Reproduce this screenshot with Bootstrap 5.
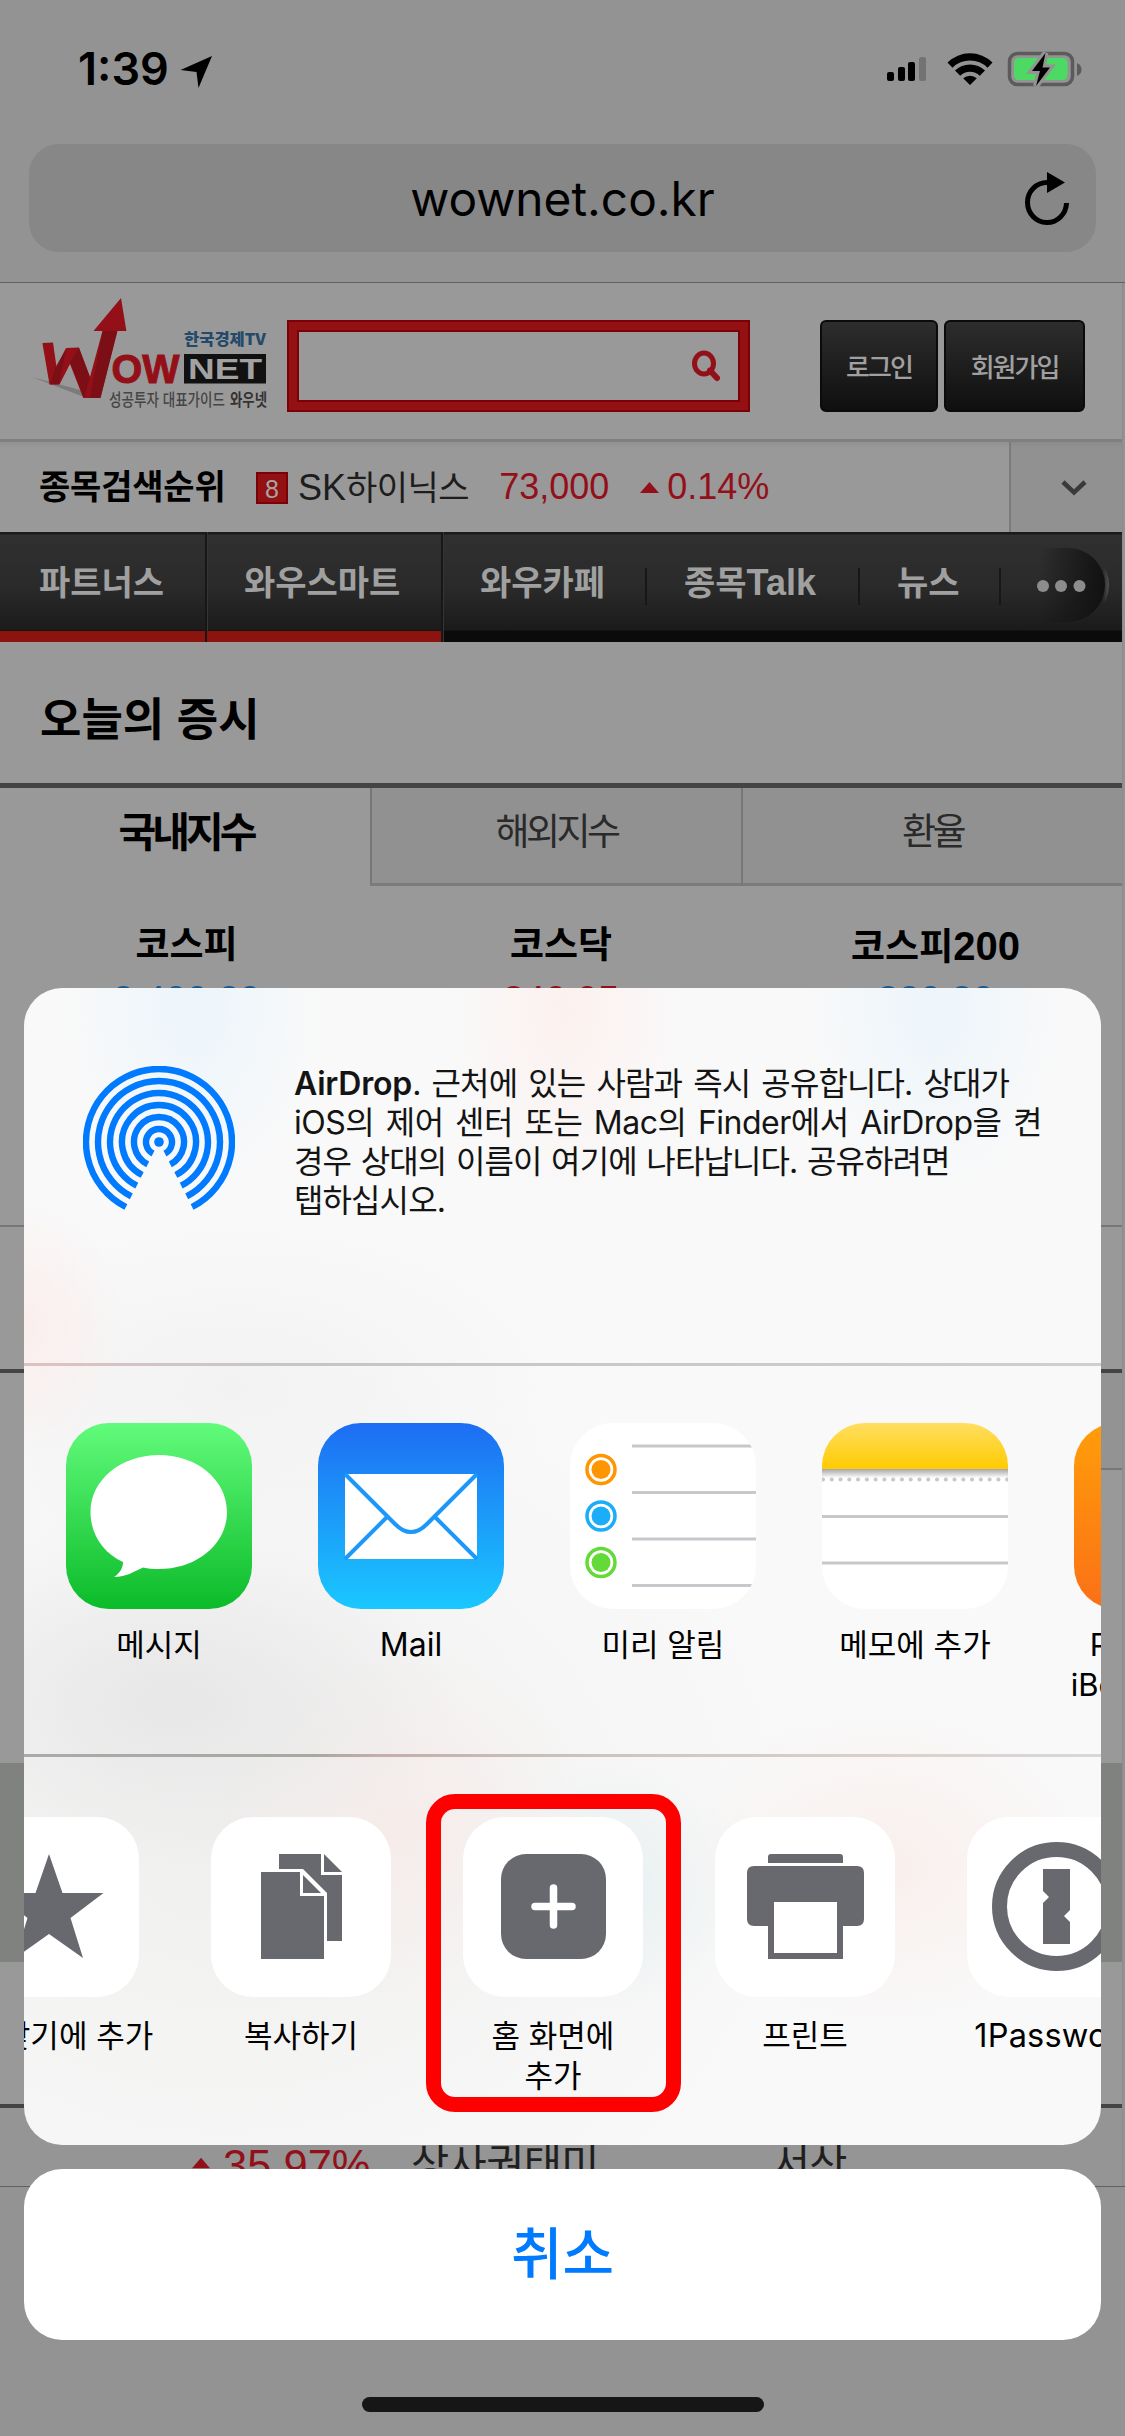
<!DOCTYPE html>
<html lang="ko">
<head>
<meta charset="utf-8">
<meta name="viewport" content="width=device-width, initial-scale=1">
<title>wownet.co.kr</title>
<link rel="stylesheet" href="https://cdn.jsdelivr.net/npm/bootstrap@5.3.0/dist/css/bootstrap.min.css">
<script src="https://cdn.jsdelivr.net/npm/bootstrap@5.3.0/dist/js/bootstrap.bundle.min.js"></script>
<style>
html,body{margin:0;background:#929292;overflow:hidden}
.screen{width:1125px;height:2436px;position:relative;overflow:hidden;background:#939393;color:#000;
  font-family:"Liberation Sans","Noto Sans CJK KR",sans-serif;line-height:1;white-space:nowrap}
.screen svg{display:block;flex:none}
.ios{font-family:Inter,"Noto Sans CJK KR",sans-serif}
.ko{font-family:"Noto Sans CJK KR",sans-serif}
.statusbar{height:144px;padding:45px 43px 0 78px}
.clock{font-size:45px;font-weight:600;line-height:48px}
.urlbar{height:108px;margin:0 29px;border-radius:30px;background:#878787;position:relative}
.urltext{font-size:47.8px;line-height:110px}
.reload{position:absolute;right:25px;top:26px}
.toolbar-end{height:31px;border-bottom:1px solid #606060}
.site{width:1123px;height:1903px;background:#999;overflow:hidden;border-right:1px solid #8b8b8b}
.masthead{height:159px;border-bottom:3px solid #7f7f7f;padding:0 37px 0 32px}
.searchbox{width:463px;height:92px;border:2px solid #7c0008;background:#931013;padding:8px;margin:37px 0 0 15px}
.searchbox>div{border:2px solid #7c0008;background:#999;height:100%;padding-right:17px}
.darkbtn{height:92px;border:2px solid #0b0b0b;border-radius:6px;background:linear-gradient(#2d2d2d,#0f0f0f);color:#a0a0a0;
  font-size:26px;font-weight:500;letter-spacing:-2px;line-height:87px;text-align:center;margin-top:37px}
.ranking{height:90px;padding-left:39px;background:linear-gradient(#929292,#999 6px)}
.rank-title{font-size:34px;font-weight:700;width:217px;letter-spacing:-.2px;margin-top:-5px}
.rank-no{width:32px;height:32px;background:#931013;border:2px solid #7c0008;color:#a5a5a5;font-size:25px;line-height:30px;text-align:center;margin-top:2px}
.red{color:#93101a}
.more{width:113px;height:90px;background:linear-gradient(#8b8b8b,#919191 6px);border-left:2px solid #7b7b7b}
.mainnav{height:110px;background:linear-gradient(#1b1b1b 0,#1b1b1b 2px,#303030 3px,#2a2a2a 50%,#1b1b1b 98px,#0b0b0b 99px,#0b0b0b);color:#a0a0a0;
  font-size:34px;font-weight:700}
.mainnav>div{height:110px;line-height:98px}
.hot{background:linear-gradient(transparent 99px,#8b140f 99px);border-right:2px solid #171717;box-shadow:1px 0 0 #353535}
.thin{background:linear-gradient(#171717,#171717) right 36px/2px 37px no-repeat}
.tabs{height:103px;border-top:5px solid #454344;background:#999}
.tab-off{background:#919191;border-left:2px solid #777;border-bottom:3px solid #7b7b7b;height:98px;font-size:37px;letter-spacing:-3.5px;color:#2a2a2a;line-height:83px;text-align:center}
.tab-on{width:370px;font-size:41px;letter-spacing:-4px;font-weight:700;line-height:82px;text-align:center;padding-left:2px}
.idx{font-size:37px;font-weight:700;text-align:center}
.idx b{font:700 40px "Liberation Sans"}
.quote{font-size:38px;height:50px;line-height:38px;text-align:center}
.below{background:#959595;color:#1f1f1f;height:82px;border-top:4px solid #444;padding:33px 0 0 192px}
.below .ko{font-size:41.500px}
.sheet{position:absolute;left:24px;top:988px;width:1077px;height:1157px;border-radius:38px;overflow:hidden;
 background:
  radial-gradient(ellipse 130px 190px at 170px 20px,#ecf5fb,transparent),
  radial-gradient(ellipse 120px 190px at 540px 20px,#fcf1ef,transparent),
  radial-gradient(ellipse 130px 190px at 910px 20px,#ecf5fb,transparent),
  radial-gradient(ellipse 100px 130px at 0 340px,#fbeeed,transparent),
  radial-gradient(ellipse 330px 170px at 210px 400px,#f2f2f2,transparent),
  radial-gradient(ellipse 290px 170px at 150px 715px,#e7e7e7,transparent),
  radial-gradient(ellipse 190px 180px at 370px 840px,#f6ecea,transparent),
  radial-gradient(ellipse 140px 130px at 590px 900px,#e9f0f2,transparent),
  radial-gradient(ellipse 210px 160px at 860px 880px,#f9efec,transparent),
  radial-gradient(ellipse 600px 500px at 200px 850px,#f0f0ef,transparent),#f9f9f9}
.airdrop{height:375px;padding:78px 0 0 59px}
.airtext{margin:-2px 0 0 59px;font-size:32px;line-height:39px;color:#141414}
.airtext span{display:block;letter-spacing:-.9px;word-spacing:1.500px}
.airtext span b{font-weight:600;letter-spacing:-.2px}
.airtext .l1{word-spacing:3px}
.airtext .l2{letter-spacing:-.5px;word-spacing:3px}
.rule{height:3px}
.rule1{background:linear-gradient(90deg,#dcc3c3,#c5c5c7 25%,#cfcfcf)}
.rule2{background:linear-gradient(90deg,#a9abaa,#aaa7a2 27%,#c3aeab 33%,#cdc6c0 55%,#dccfcb 80%,#d8d8d8)}
.apps{height:388px;padding:57px 0 0 9px}
.tile{width:252px;flex:none;text-align:center;font-size:31px;line-height:40px;color:#000}
.tile .face{width:186px;height:186px;border-radius:43px;overflow:hidden;margin:0 auto 16px}
.acts{padding:60px 0 0 0;margin-left:-101px}
.acts .face{width:180px;height:180px;border-radius:42px;background:#fff;margin-bottom:19px}
.cancelbtn{position:absolute;left:24px;top:2169px;width:1077px;height:171px;border-radius:38px;border:0;background:#fff;color:#007aff;font-size:56px;font-weight:500;line-height:150px;padding:0 0 9px}
.hilite{position:absolute;left:426px;top:1794px;width:255px;height:318px;border:15px solid #f00;border-radius:29px}
.homebar{position:absolute;left:362px;top:2397px;width:402px;height:15px;border-radius:8px;background:#161616}
</style>
</head>
<body>
<div class="screen">
  <div class="statusbar d-flex justify-content-between ios">
    <div class="d-flex">
      <div class="clock">1:39</div>
      <svg class="mt-2" style="margin-left:10px" width="34" height="38" viewBox="0 0 34 38"><path d="M33 3 19.500 35 17.500 19 1.500 17z"/></svg>
    </div>
    <svg width="196" height="44" viewBox="886 45 196 44">
      <rect x="887" y="72" width="7" height="9" rx="2"/><rect x="898" y="67" width="7" height="14" rx="2"/><rect x="908" y="62" width="7" height="19" rx="2"/><rect x="919" y="57" width="7" height="24" rx="2" fill="#737373"/>
      <path d="M947.500 62.500a32 32 0 0 1 45 0l-5 5.200a24.700 24.700 0 0 0-35 0zM955 70.500a21.500 21.500 0 0 1 30 0l-5.200 5.200a14 14 0 0 0-19.600 0zM963.200 78.300a10 10 0 0 1 13.600 0L970 85z"/>
      <rect x="1009.500" y="53.500" width="63" height="31" rx="8" fill="none" stroke="#5b5b5b" stroke-width="3.500"/>
      <path d="M1077 63q4.500 2 4.500 6.500t-4.500 6.500z" fill="#5b5b5b"/>
      <rect x="1014" y="58" width="53.500" height="22" rx="4.500" fill="#4cd964"/>
      <path d="M1045.500 53 1032 71H1040L1036 86 1050 67.500H1042.500z" stroke="#939393" stroke-width="6" paint-order="stroke"/>
    </svg>
  </div>
  <div class="urlbar text-center ios">
    <span class="urltext">wownet.co.kr</span>
    <svg class="reload" width="48" height="56" viewBox="0 0 48 56"><path d="M43.500 33A19.500 20 0 1 1 24 12.500" fill="none" stroke="#000" stroke-width="5"/><path d="M24 2 42 12.500 24 23z"/></svg>
  </div>
  <div class="toolbar-end"></div>

  <div class="site">
    <div class="masthead d-flex">
      <svg style="margin-top:7px" width="240" height="130" viewBox="32 290 240 130">
        <path d="M32 377 84 391v6z" fill="#7c7c7c"/>
        <path d="M42.400 343 53 342.500 56.500 367 66 348 79 347.500 90 377 102.500 331H93.500L121 298 126.400 331H117.400L100.500 398H83.300L70 364 59.500 384.500H49.500z" fill="#931018"/>
        <path d="M66 349 59 384.500H50L56 366zM79 348 90 377 84 398 70 362zM102.500 331H117.400L100.500 398H90z" fill="#6e0f14" opacity=".65"/>
        <g font-family="Liberation Sans" font-weight="700">
          <text x="111.500" y="383" font-size="40" fill="#931018" stroke="#931018" textLength="68" lengthAdjust="spacingAndGlyphs">OW</text>
          <rect x="184" y="354" width="82" height="29.500" fill="#111"/>
          <text x="188" y="379" font-size="29" fill="#a2a2a2" textLength="74" lengthAdjust="spacingAndGlyphs">NET</text>
        </g>
        <g font-family="Noto Sans CJK KR">
          <text x="184" y="345" font-size="16" font-weight="900" fill="#24496a" textLength="82" lengthAdjust="spacingAndGlyphs">한국경제TV</text>
          <text x="109" y="406" font-size="17" font-weight="500" fill="#454545" textLength="116" lengthAdjust="spacingAndGlyphs">성공투자 대표가이드</text>
          <text x="230" y="406" font-size="17" font-weight="700" fill="#333" textLength="37" lengthAdjust="spacingAndGlyphs">와우넷</text>
        </g>
      </svg>
      <div class="searchbox"><div class="d-flex align-items-center justify-content-end">
        <svg width="30" height="32" viewBox="0 0 30 32"><ellipse cx="13" cy="13.500" rx="9.500" ry="10.500" fill="none" stroke="#931018" stroke-width="5"/><path d="M19 20.500 26 28" stroke="#931018" stroke-width="6" stroke-linecap="round"/></svg>
      </div></div>
      <div class="darkbtn ko ms-auto" style="width:118px">로그인</div>
      <div class="darkbtn ko" style="width:141px;margin-left:6px">회원가입</div>
    </div>
    <div class="ranking d-flex align-items-center">
      <div class="rank-title ko">종목검색순위</div>
      <div class="rank-no">8</div>
      <div class="d-flex align-items-center" style="font-size:36px">
        <span style="margin-left:10px;color:#1d1d1d">SK<span class="ko" style="font-size:34px;letter-spacing:-.5px">하이닉스</span></span>
        <span class="red" style="margin-left:30px">73,000</span>
        <svg style="margin-left:31px" width="19" height="11" viewBox="0 0 19 11"><path d="M9.500 0 19 11H0z" fill="#93101a"/></svg>
        <span class="red" style="margin-left:8px">0.14%</span>
      </div>
      <div class="more ms-auto d-flex align-items-center justify-content-center">
        <svg style="margin-left:15px" width="28" height="20" viewBox="0 0 28 20"><path d="M3 5 14 15.500 25 5" fill="none" stroke="#3a3a3a" stroke-width="4.500"/></svg>
      </div>
    </div>
    <div class="mainnav d-flex ko">
      <div class="hot" style="width:207px;padding-left:39px">파트너스</div>
      <div class="hot" style="width:236px;padding-left:37px">와우스마트</div>
      <div class="thin" style="width:204px;padding-left:37px">와우카페</div>
      <div class="thin" style="width:213px;padding-left:37px">종목<span style="font:700 36px 'Liberation Sans'">Talk</span></div>
      <div class="thin" style="width:141px;padding-left:37px">뉴스</div>
      <svg width="120" height="98" viewBox="1001 532 120 98"><defs><linearGradient id="pill"><stop offset="0" stop-color="#111" stop-opacity="0"/><stop offset="1" stop-color="#111"/></linearGradient><linearGradient id="glow"><stop offset=".9" stop-color="#555" stop-opacity="0"/><stop offset="1" stop-color="#666"/></linearGradient></defs>
        <path d="M1050 548h22a37 37 0 0 1 0 74h-22z" fill="url(#glow)" opacity=".7"/><path d="M1040 548h28a37 37 0 0 1 0 74h-28z" fill="url(#pill)"/><g fill="#8d8d8d"><circle cx="1043" cy="586" r="6"/><circle cx="1061" cy="586" r="6"/><circle cx="1079.500" cy="586" r="6"/></g></svg>
    </div>
    <div class="ko" style="height:141px;padding-left:40px;font-size:45px;font-weight:700;line-height:150px">오늘의 증시</div>
    <div class="tabs d-flex ko">
      <div class="tab-on">국내지수</div>
      <div class="tab-off" style="width:371px">해외지수</div>
      <div class="tab-off flex-fill">환율</div>
    </div>
    <div class="d-flex ko" style="height:95px;padding-top:38px">
      <div class="idx" style="width:373px">코스피</div>
      <div class="idx" style="width:376px">코스닥</div>
      <div class="idx flex-fill">코스피<b>200</b></div>
    </div>
    <div class="d-flex" style="height:244px">
      <div class="quote" style="width:373px;color:#175a91">2,400.20</div>
      <div class="quote" style="width:376px;color:#93101a">840.05</div>
      <div class="quote flex-fill" style="color:#175a91">320.30</div>
    </div>
    <div style="height:144px;border-top:2px solid #777"></div>
    <div style="height:394px;border-top:4px solid #444;background:linear-gradient(90deg,transparent 560px,#939393 560px) 0 0/100% 95px no-repeat">
      <div style="height:97px;border-bottom:2px solid #777;margin-left:560px"></div>
    </div>
    <div style="height:199px;background:#7f827f"></div>
    <div style="height:142px"></div>
    <div class="below d-flex">
      <svg style="margin:16px 13px 0 0" width="18" height="12" viewBox="0 0 19 11"><path d="M9.500 0 19 11H0z" fill="#93101a"/></svg>
      <span class="red" style="width:188px;padding-top:4px;font-size:43.500px">35.97%</span>
      <span class="ko" style="width:361px;letter-spacing:-.6px">상사권태미</span><span class="ko" style="letter-spacing:-1px">서산</span>
    </div>
  </div>
  <div style="height:1px;background:#606060"></div>

  <div class="sheet ios">
    <div class="airdrop d-flex align-items-start">
      <svg width="152" height="152" viewBox="-76 -76 152 152"><g fill="none" stroke="#007aff" stroke-width="6.400">
        <path d="M-33.100 65A73 73 0 1 1 33.100 65M-27.700 54.400A61 61 0 1 1 27.700 54.400M-22.200 43.700A49 49 0 1 1 22.200 43.700M-16.800 33A37 37 0 1 1 16.800 33M-11.300 22.300A25 25 0 1 1 11.300 22.300M-6 11.600A13 13 0 1 1 6 11.600"/></g><circle r="4.800" fill="#007aff"/></svg>
      <div class="airtext"><span class="l1"><b>AirDrop</b>. 근처에 있는 사람과 즉시 공유합니다. 상대가</span><span class="l2">iOS의 제어 센터 또는 Mac의 Finder에서 AirDrop을 켠</span><span>경우 상대의 이름이 여기에 나타납니다. 공유하려면</span><span>탭하십시오.</span></div>
    </div>
    <div class="rule rule1"></div>
    <div class="apps d-flex">
      <div class="tile"><div class="face" style="background:linear-gradient(#62fb7b,#0bbb29)"><svg width="186" height="186" viewBox="0 0 186 186"><path fill="#fff" d="M93 32c38 0 68 25 68 57s-30 57-68 57c-6 0-11-.6-16-1.600C69 148 60 154 48 154c6-4 9-9 9-15C37 130 24.500 111 24.500 89 24.500 57 55 32 93 32z"/></svg></div>메시지</div>
      <div class="tile"><div class="face" style="background:linear-gradient(#1d6df3,#1ac8ff)"><svg width="186" height="186" viewBox="0 0 186 186"><rect x="27" y="51" width="132" height="85" rx="4" fill="#fff"/><path d="M27 51 77 101Q93 117 109 101L159 51M27 136 69 94M159 136 117 94" fill="none" stroke="#1c98fb" stroke-width="4"/></svg></div><span style="font-size:32px">Mail</span></div>
      <div class="tile"><div class="face bg-white"><svg width="186" height="186" viewBox="0 0 186 186"><path d="M62 23h124M62 69.500h124M62 116h124M62 162.500h124" stroke="#c8c7cc" stroke-width="3.200"/><g fill="none" stroke-width="3.500"><circle cx="31" cy="46.500" r="14" stroke="#ff9500"/><circle cx="31" cy="93" r="14" stroke="#1badf8"/><circle cx="31" cy="139.500" r="14" stroke="#63da38"/></g><circle cx="31" cy="46.500" r="9.500" fill="#ff9500"/><circle cx="31" cy="93" r="9.500" fill="#1badf8"/><circle cx="31" cy="139.500" r="9.500" fill="#63da38"/></svg></div>미리 알림</div>
      <div class="tile"><div class="face bg-white"><svg width="186" height="186" viewBox="0 0 186 186"><defs><linearGradient id="yl" x2="0" y2="1"><stop stop-color="#ffde62"/><stop offset="1" stop-color="#ffcb00"/></linearGradient><linearGradient id="sh" x2="0" y2="1"><stop stop-color="#a5a5aa"/><stop offset="1" stop-color="#fff"/></linearGradient></defs><rect width="186" height="46" fill="url(#yl)"/><rect y="46" width="186" height="9" fill="url(#sh)"/><path d="M1 56.500H186" stroke="#c8c7cc" stroke-width="4.200" stroke-linecap="round" stroke-dasharray="0 8.770"/><path d="M0 93.500h186M0 140h186" stroke="#c8c7cc" stroke-width="3.200"/></svg></div>메모에 추가</div>
      <div class="tile"><div class="face" style="background:linear-gradient(#ff9d0a,#fb7016)"></div>PDF 파일을<br>iBooks에 저장</div>
    </div>
    <div class="rule rule2"></div>
    <div class="acts d-flex">
      <div class="tile"><div class="face"><svg width="180" height="180" viewBox="-40.500 1817 180 180"><path fill="#68686f" d="M49.500 1854 63 1893H104L71 1918 83.500 1958 49.500 1934 15.500 1958 28 1918-5 1893H36z"/></svg></div>즐겨찾기에 추가</div>
      <div class="tile"><div class="face"><svg width="180" height="180" viewBox="211 1817 180 180"><path fill="#68686f" d="M279 1854h42v21h21v66h-15v-48l-24-24h-24zM324 1854l18 18h-18zM261 1872h39v24h24v63h-63zM303 1875l18 18h-18z"/></svg></div>복사하기</div>
      <div class="tile"><div class="face"><svg width="180" height="180" viewBox="463 1817 180 180"><rect x="501" y="1854" width="105" height="105" rx="25" fill="#68686f"/><path d="M553.500 1888v37M535 1906.500h37" stroke="#fff" stroke-width="7.500" stroke-linecap="round"/></svg></div>홈 화면에<br>추가</div>
      <div class="tile"><div class="face"><svg width="180" height="180" viewBox="715 1817 180 180"><path fill="#68686f" d="M768 1863v-6q0-3 3-3h69q3 0 3 3v6zM754 1866h103q7 0 7 7v46q0 7-7 7h-14v33h-75v-33h-14q-7 0-7-7v-46q0-7 7-7z"/><path fill="#fff" d="M774 1902h63v51h-63z"/></svg></div>프린트</div>
      <div class="tile"><div class="face"><svg width="180" height="180" viewBox="967 1817 180 180"><circle cx="1056.500" cy="1906.500" r="57" fill="none" stroke="#68686f" stroke-width="15"/><path fill="#68686f" d="M1043 1869h27v41l-6 6 6 6v22h-27v-41l6-6-6-6z"/></svg></div><span style="font-size:32.500px;letter-spacing:.2px">1Password</span></div>
    </div>
  </div>
  <button class="cancelbtn ko" type="button">취소</button>
  <div class="hilite"></div>
  <div class="homebar"></div>
</div>
</body>
</html>
